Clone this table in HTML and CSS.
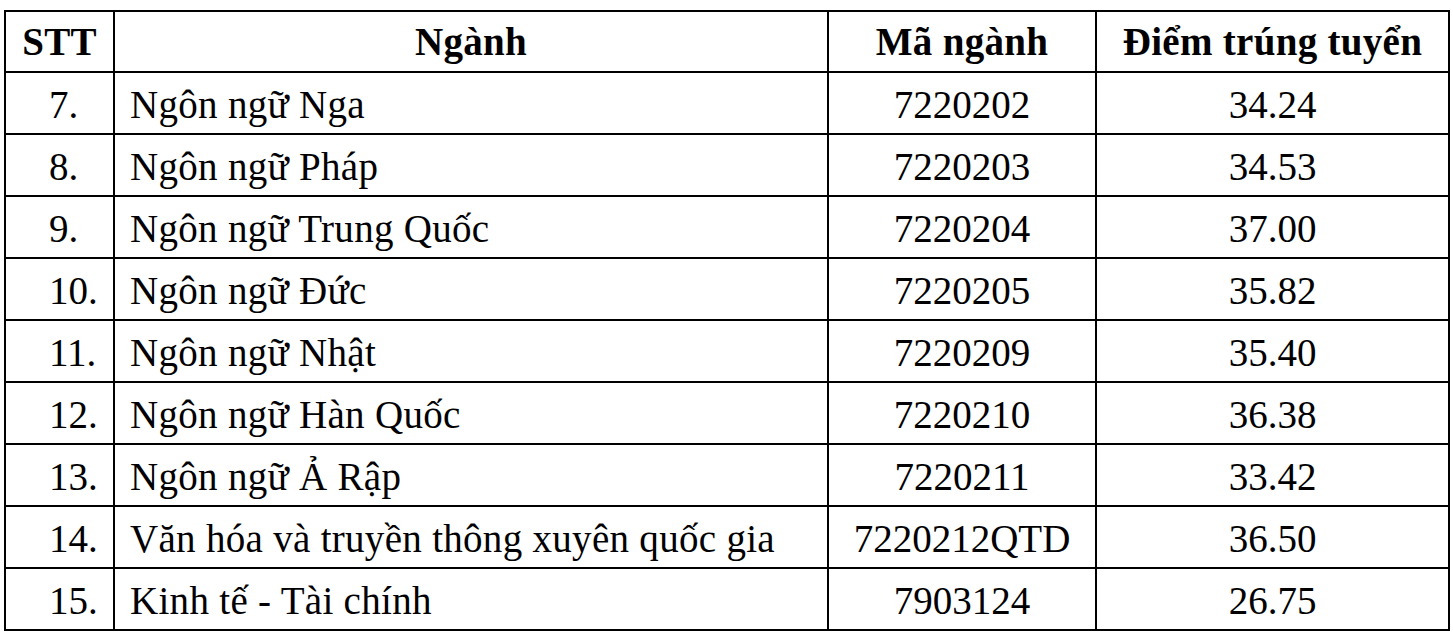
FILE: index.html
```html
<!DOCTYPE html>
<html lang="vi">
<head>
<meta charset="utf-8">
<link rel="stylesheet" href="styles.css">
</head>
<body>
<table class="grid">
  <colgroup>
    <col class="c-stt">
    <col class="c-name">
    <col class="c-code">
    <col class="c-score">
  </colgroup>
  <thead>
    <tr class="head">
      <th>STT</th>
      <th>Ngành</th>
      <th>Mã ngành</th>
      <th>Điểm trúng tuyển</th>
    </tr>
  </thead>
  <tbody>
    <tr><td class="stt">7.</td><td class="name">Ngôn ngữ Nga</td><td class="mid">7220202</td><td class="mid">34.24</td></tr>
    <tr><td class="stt">8.</td><td class="name">Ngôn ngữ Pháp</td><td class="mid">7220203</td><td class="mid">34.53</td></tr>
    <tr><td class="stt">9.</td><td class="name">Ngôn ngữ Trung Quốc</td><td class="mid">7220204</td><td class="mid">37.00</td></tr>
    <tr><td class="stt">10.</td><td class="name">Ngôn ngữ Đức</td><td class="mid">7220205</td><td class="mid">35.82</td></tr>
    <tr><td class="stt">11.</td><td class="name">Ngôn ngữ Nhật</td><td class="mid">7220209</td><td class="mid">35.40</td></tr>
    <tr><td class="stt">12.</td><td class="name">Ngôn ngữ Hàn Quốc</td><td class="mid">7220210</td><td class="mid">36.38</td></tr>
    <tr><td class="stt">13.</td><td class="name">Ngôn ngữ Ả Rập</td><td class="mid">7220211</td><td class="mid">33.42</td></tr>
    <tr><td class="stt">14.</td><td class="name">Văn hóa và truyền thông xuyên quốc gia</td><td class="mid">7220212QTD</td><td class="mid">36.50</td></tr>
    <tr><td class="stt">15.</td><td class="name">Kinh tế - Tài chính</td><td class="mid">7903124</td><td class="mid">26.75</td></tr>
  </tbody>
</table>
</body>
</html>
```

FILE: styles.css
```css
html, body {
  margin: 0;
  background: #ffffff;
}
body {
  padding: 10px 0 0 4px;
  font-family: "Liberation Serif", "Times New Roman", serif;
  color: #000000;
  overflow: hidden;
  height: 634px;
  box-sizing: border-box;
}
.grid {
  border-collapse: collapse;
  table-layout: fixed;
  width: 1446px;
  font-size: 39px;
}
.c-stt { width: 109px; }
.c-name { width: 714px; }
.c-code { width: 268px; }
.c-score { width: 353px; }
.grid th, .grid td {
  border: 2px solid #000000;
  padding: 0;
  vertical-align: middle;
  line-height: 44px;
  white-space: nowrap;
  overflow: hidden;
}
.head {
  height: 61px;
}
.head th {
  font-weight: bold;
  text-align: center;
  letter-spacing: 0.3px;
}
.grid tbody tr {
  height: 62px;
}
.grid td {
  padding-top: 3px;
}
.grid td.stt {
  text-align: left;
  padding-left: 43px;
}
.grid td.name {
  text-align: left;
  padding-left: 15px;
  letter-spacing: 0.3px;
}
.mid {
  text-align: center;
}
```
